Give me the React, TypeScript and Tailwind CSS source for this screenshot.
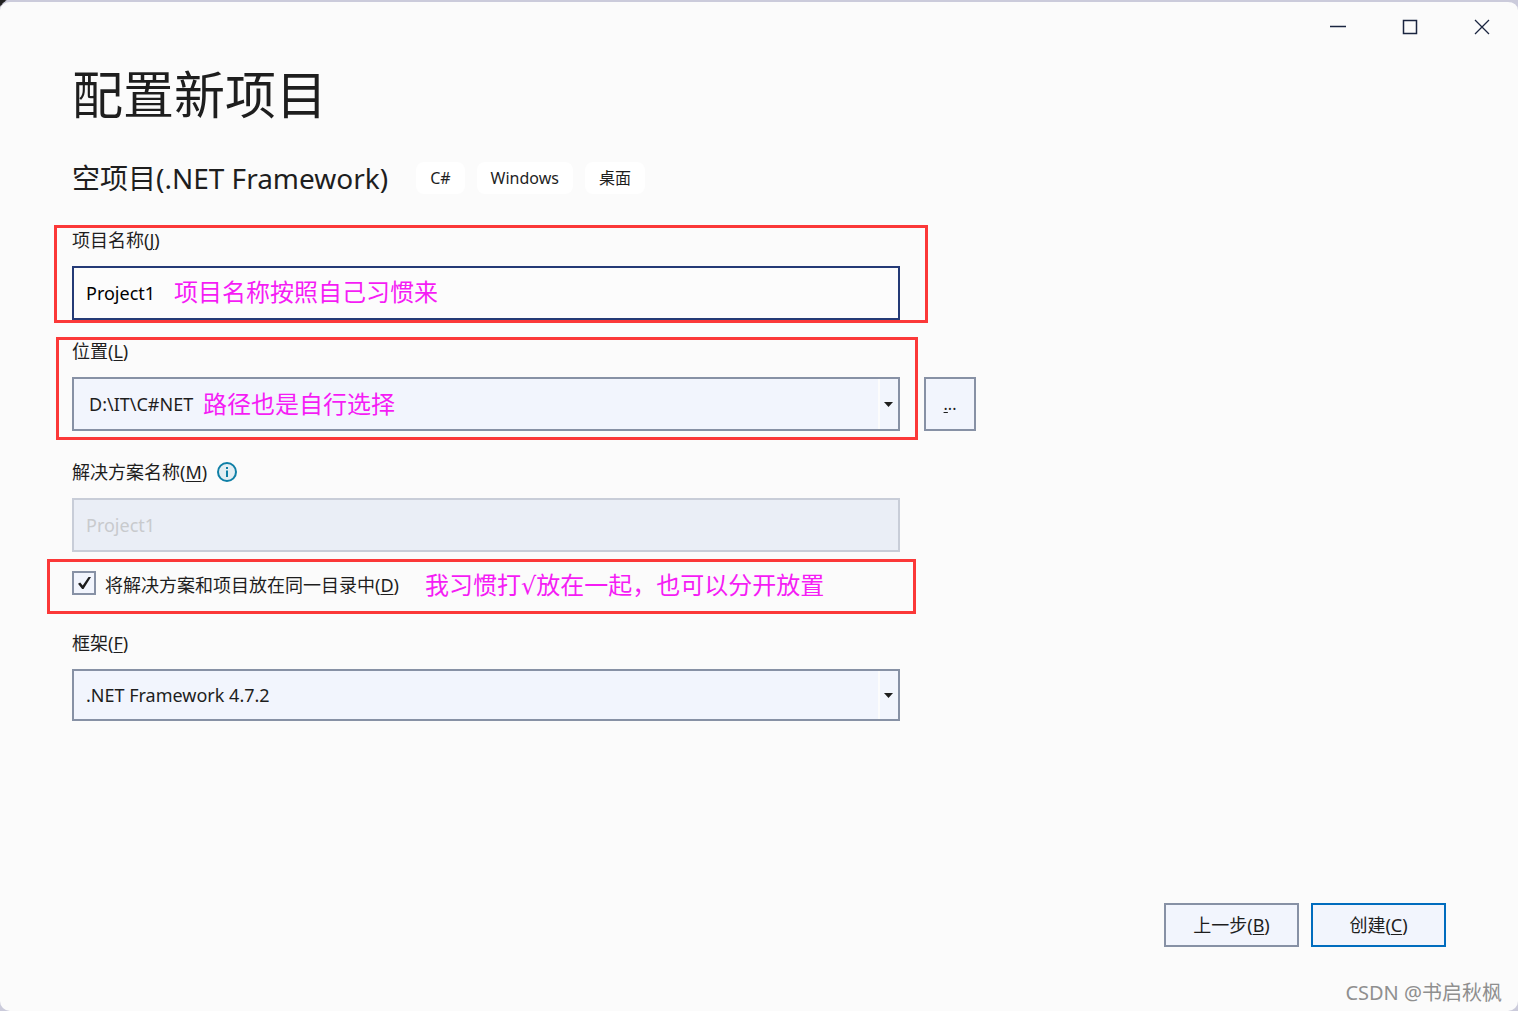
import { useState, type ReactNode } from "react";

function AccessKey({ text, letter }: { text: string; letter: string }) {
  return (
    <>
      {text}(<span className="underline decoration-1 underline-offset-2">{letter}</span>)
    </>
  );
}

function Tag({ children }: { children: ReactNode }) {
  return <li className="rounded-lg bg-white px-[14px] text-base leading-8">{children}</li>;
}

function Note({ className = "", children }: { className?: string; children: ReactNode }) {
  return (
    <span
      className={`pointer-events-none whitespace-nowrap font-['Noto_Sans','DejaVu_Sans','Noto_Sans_CJK_SC',sans-serif] text-2xl leading-8 text-[#f51cf5] ${className}`}
    >
      {children}
    </span>
  );
}

function Frame({ className }: { className: string }) {
  return <div aria-hidden="true" className={`pointer-events-none absolute border-3 border-[#fb3838] ${className}`} />;
}

function Combo({ id, className, options }: { id: string; className: string; options: string[] }) {
  return (
    <div className="relative">
      <select
        id={id}
        className={`block w-full appearance-none rounded-none border-2 border-[#8791a5] bg-[#f2f5fd] pr-8 text-lg text-[#1e1e1e] outline-none ${className}`}
      >
        {options.map((o) => (
          <option key={o}>{o}</option>
        ))}
      </select>
      <span className="pointer-events-none absolute inset-y-[2px] right-[2px] flex w-5 items-center border-l-2 border-[#fcfcfc] pl-1">
        <svg width="9" height="5" viewBox="0 0 9 5" fill="#1e1e1e">
          <path d="M0 0h9L4.500 5z" />
        </svg>
      </span>
    </div>
  );
}

const labelClass = "mb-[14px] flex h-6 items-center text-lg leading-6";

export default function App() {
  const [name, setName] = useState("Project1");
  const [sameDir, setSameDir] = useState(true);

  return (
    <div className="min-h-screen bg-[#cbcbdb] bg-[radial-gradient(circle_at_top_left,#222222_5px,#cbcbdb_7px)] font-['Noto_Sans','Noto_Sans_CJK_SC',sans-serif] text-[#1e1e1e]">
      <main className="relative flex min-h-screen flex-col rounded-[10px] border-t-2 border-[#cbcbdb] bg-[#fbfbfb]">
        <header className="flex h-[50px] justify-end text-[#1a2540]">
          <button aria-label="最小化" className="flex w-[72px] items-center justify-center">
            <svg width="16" height="16" viewBox="0 0 16 16" fill="none" stroke="currentColor" strokeWidth="1.500">
              <path d="M0 7.500h16" />
            </svg>
          </button>
          <button aria-label="最大化" className="flex w-[72px] items-center justify-center">
            <svg width="16" height="16" viewBox="0 0 16 16" fill="none" stroke="currentColor" strokeWidth="1.500">
              <path d="M1.500 1.500h13v13h-13z" />
            </svg>
          </button>
          <button aria-label="关闭" className="flex w-[72px] items-center justify-center">
            <svg width="16" height="16" viewBox="0 0 16 16" fill="none" stroke="currentColor" strokeWidth="1.300">
              <path d="M1 1l14 14M15 1L1 15" />
            </svg>
          </button>
        </header>

        <div className="px-[72px]">
          <h1 className="mt-[10px] text-[51px] leading-[64px]">配置新项目</h1>
          <div className="mt-8 flex items-center gap-7">
            <h2 className="text-[28px] leading-10">空项目(.NET Framework)</h2>
            <ul className="flex gap-3">
              <Tag>C#</Tag>
              <Tag>Windows</Tag>
              <Tag>桌面</Tag>
            </ul>
          </div>

          <form className="mt-[30px]" onSubmit={(e) => e.preventDefault()}>
            <div className="relative max-w-[828px]">
              <label htmlFor="name" className={labelClass}>
                <span><AccessKey text="项目名称" letter="J" /></span>
              </label>
              <input
                id="name"
                value={name}
                onChange={(e) => setName(e.target.value)}
                className="block h-[54px] w-full border-2 border-[#243a76] bg-[#fcfcfc] px-3 text-lg text-black outline-none"
              />
              <Note className="absolute bottom-3 left-[102px]">项目名称按照自己习惯来</Note>
              <Frame className="-top-[3px] -right-7 -bottom-[3px] -left-[18px]" />
            </div>

            <div className="mt-[19px] flex max-w-[904px] items-end gap-6">
              <div className="relative flex-1">
                <label htmlFor="location" className={labelClass}>
                  <span><AccessKey text="位置" letter="L" /></span>
                </label>
                <Combo id="location" className="h-[54px] pl-[15px]" options={["D:\\IT\\C#NET"]} />
                <Note className="absolute bottom-[11px] left-[131px]">路径也是自行选择</Note>
                <Frame className="-top-[2px] -right-[18px] -bottom-[9px] -left-4" />
              </div>
              <button
                type="button"
                aria-label="浏览"
                className="h-[54px] w-[52px] border-2 border-[#8791a5] bg-[#f2f5fd] text-base"
              >
                <span className="underline underline-offset-2">.</span>..
              </button>
            </div>

            <div className="mt-[29px] max-w-[828px]">
              <label htmlFor="solution" className={labelClass}>
                <span><AccessKey text="解决方案名称" letter="M" /></span>
                <svg className="ml-[10px]" width="20" height="20" viewBox="0 0 20 20">
                  <circle cx="10" cy="10" r="9" fill="#e3eef3" stroke="#0f7fa6" strokeWidth="2" />
                  <path d="M9 5h2v2H9zM9 8.500h2V15H9z" fill="#0f7fa6" />
                </svg>
              </label>
              <input
                id="solution"
                value={name}
                disabled
                className="block h-[54px] w-full border-2 border-[#c8cdd8] bg-[#eaeef6] px-3 text-lg text-[#c8cacd]"
              />
            </div>

            <div className="relative mt-[19px] flex h-6 max-w-[828px] items-center">
              <span className="relative h-6 w-6 shrink-0">
                <input
                  id="same-dir"
                  type="checkbox"
                  checked={sameDir}
                  onChange={(e) => setSameDir(e.target.checked)}
                  className="block h-6 w-6 appearance-none border-2 border-[#8791a5] bg-[#f2f5fd]"
                />
                {sameDir && (
                  <svg className="pointer-events-none absolute inset-0" width="24" height="24" viewBox="0 0 24 24">
                    <path d="M6 12.700l2.200-1.300 2.500 3.200L16.500 6h2.500L11.500 18h-1.400z" fill="#1e1e1e" />
                  </svg>
                )}
              </span>
              <label htmlFor="same-dir" className="ml-[9px] whitespace-nowrap pt-1 text-lg leading-6">
                <AccessKey text="将解决方案和项目放在同一目录中" letter="D" />
              </label>
              <Note className="ml-[26px] pt-1">我习惯打√放在一起，也可以分开放置</Note>
              <Frame className="-top-3 -right-4 -bottom-[19px] -left-[25px]" />
            </div>

            <div className="mt-9 max-w-[828px]">
              <label htmlFor="framework" className={labelClass}>
                <span><AccessKey text="框架" letter="F" /></span>
              </label>
              <Combo id="framework" className="h-[52px] pl-3" options={[".NET Framework 4.7.2"]} />
            </div>
          </form>
        </div>

        <footer className="mt-auto flex justify-end gap-3 px-[72px] pt-6 pb-16">
          <button className="h-11 w-[135px] border-2 border-[#8791a5] bg-[#f2f5fd] text-lg">
            <AccessKey text="上一步" letter="B" />
          </button>
          <button className="h-11 w-[135px] border-2 border-[#006cbe] bg-[#f2f5fd] text-lg">
            <AccessKey text="创建" letter="C" />
          </button>
        </footer>
        <p className="absolute right-4 bottom-1 text-xl leading-7 text-[#8f8f8f]">CSDN @书启秋枫</p>
      </main>
    </div>
  );
}
